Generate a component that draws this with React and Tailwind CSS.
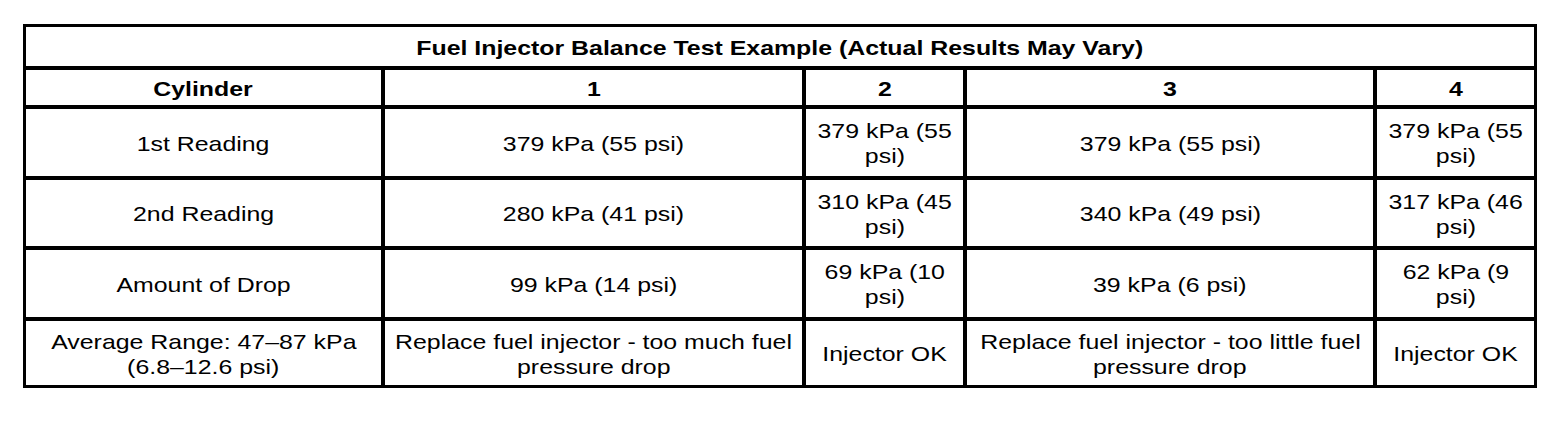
import React from "react";

const L = ({ children }) => (
  <span className="block whitespace-nowrap">
    <span className="inline-block scale-x-[1.185]">{children}</span>
  </span>
);

const Cell = ({ lines, bold, span }) => (
  <div
    className={
      "bg-white flex flex-col items-center justify-center text-center text-black pt-[1px] " +
      (bold ? "font-bold " : "") +
      (span ? "col-span-5" : "")
    }
  >
    {lines.map((l, i) => (
      <L key={i}>{l}</L>
    ))}
  </div>
);

const rows = [
  [["Cylinder"], ["1"], ["2"], ["3"], ["4"]],
  [
    ["1st Reading"],
    ["379 kPa (55 psi)"],
    ["379 kPa (55", "psi)"],
    ["379 kPa (55 psi)"],
    ["379 kPa (55", "psi)"],
  ],
  [
    ["2nd Reading"],
    ["280 kPa (41 psi)"],
    ["310 kPa (45", "psi)"],
    ["340 kPa (49 psi)"],
    ["317 kPa (46", "psi)"],
  ],
  [
    ["Amount of Drop"],
    ["99 kPa (14 psi)"],
    ["69 kPa (10", "psi)"],
    ["39 kPa (6 psi)"],
    ["62 kPa (9", "psi)"],
  ],
  [
    ["Average Range: 47–87 kPa", "(6.8–12.6 psi)"],
    ["Replace fuel injector - too much fuel", "pressure drop"],
    ["Injector OK"],
    ["Replace fuel injector - too little fuel", "pressure drop"],
    ["Injector OK"],
  ],
];

export default function App() {
  return (
    <div className="w-[1568px] h-[422px] bg-white pt-[24px] pl-[23px]">
      <div
        className="inline-grid bg-black p-[3px] gap-[4px] grid-cols-[355px_417px_157px_406px_157px] grid-rows-[39px_35px_67px_66px_67px_64px] text-[21px] leading-[25px]"
        style={{ fontFamily: '"Liberation Sans", Arial, sans-serif' }}
      >
        <Cell span bold lines={["Fuel Injector Balance Test Example (Actual Results May Vary)"]} />
        {rows.map((r, ri) =>
          r.map((c, ci) => <Cell key={ri + "-" + ci} bold={ri === 0} lines={c} />)
        )}
      </div>
    </div>
  );
}
